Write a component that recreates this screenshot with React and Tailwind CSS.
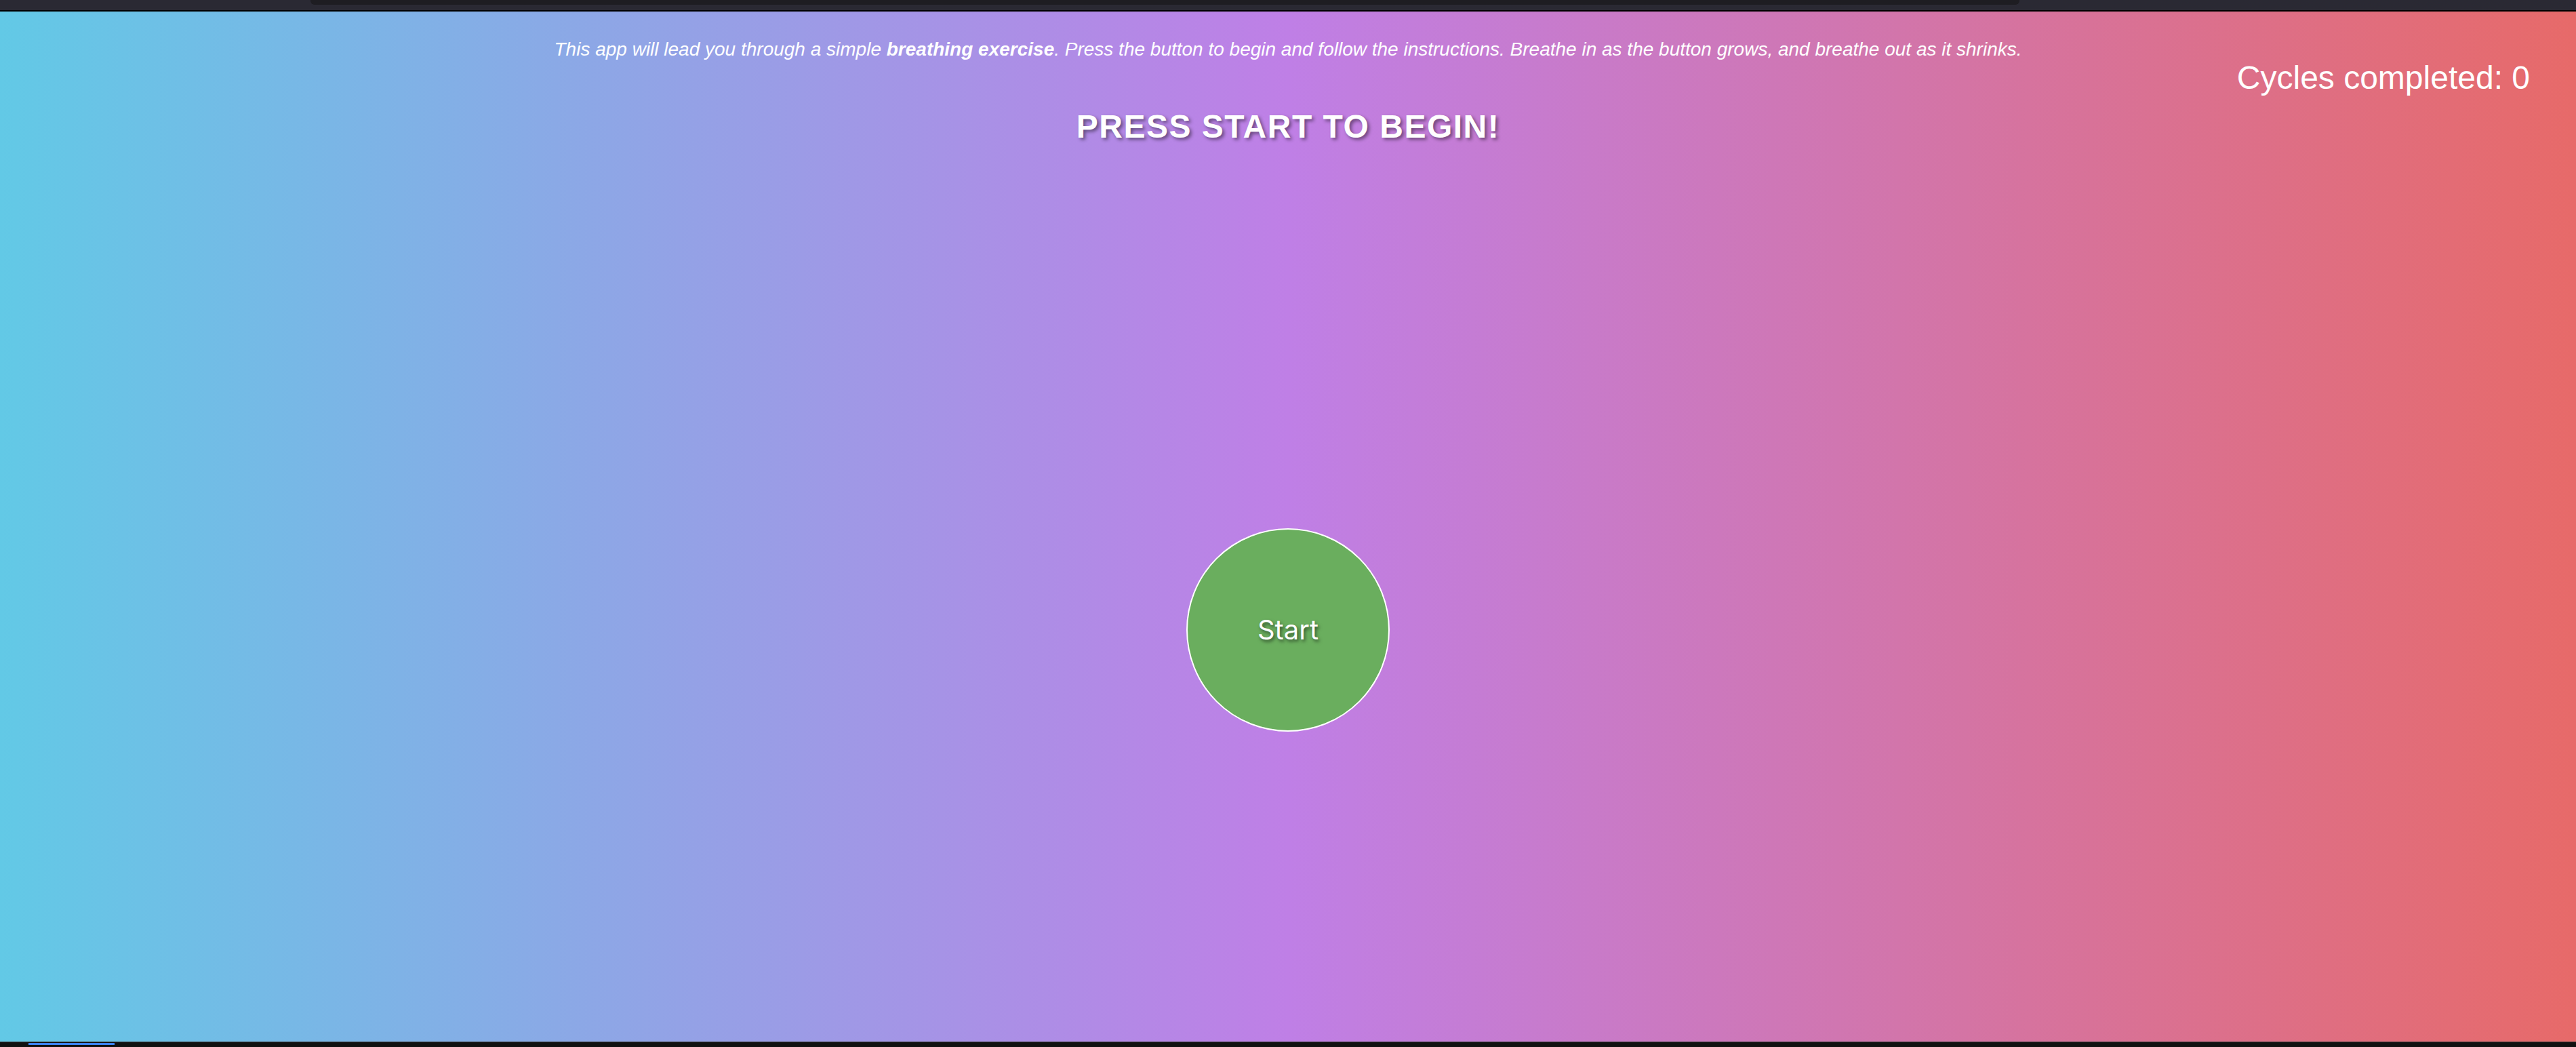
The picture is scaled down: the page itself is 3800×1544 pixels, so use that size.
import React from 'react';

function App() {
  return (
    <div className="h-screen w-full flex flex-col overflow-hidden bg-[#111111] font-['Liberation_Sans',Arial,sans-serif]">
      {/* browser chrome strip */}
      <div className="h-[15px] bg-[#2a2933] flex shrink-0">
        <div className="w-[458px]" />
        <div className="w-[2521px] h-[7px] bg-[#1e1d22] rounded-b-[6px]" />
      </div>
      <div className="h-[2px] bg-black shrink-0" />

      {/* app */}
      <main className="relative flex-1 flex flex-col items-center text-white bg-[linear-gradient(to_right,#62c9e6,#bf7fe6_50%,#e76a69)]">
        <p className="mt-[40px] text-[28px] italic leading-[32px] text-center">
          This app will lead you through a simple <b>breathing exercise</b>. Press the button to begin and follow the instructions. Breathe in as the button grows, and breathe out as it shrinks.
        </p>
        <h2 className="mt-[70px] text-[48px] font-bold leading-[55px] tracking-[1.5px] [text-shadow:3px_3px_5px_rgba(0,0,0,0.45)]">
          PRESS START TO BEGIN!
        </h2>
        <div className="absolute top-[70px] right-[68px] text-[48px] leading-[55px]">
          Cycles completed: 0
        </div>
        <button className="mt-[565px] w-[300px] h-[300px] rounded-full bg-[#6aae5e] border-2 border-white flex items-center justify-center text-[40px] text-white font-['Inter',sans-serif] [text-shadow:2px_3px_5px_rgba(0,0,0,0.55)]">
          Start
        </button>
      </main>

      {/* bottom strip */}
      <div className="h-px bg-[#3c3c3c] shrink-0" />
      <div className="h-[7px] bg-[#111111] shrink-0 pt-px">
        <div className="ml-[42px] w-[127px] h-[3px] bg-[#3b82f6]" />
      </div>
    </div>
  );
}

export default App;
